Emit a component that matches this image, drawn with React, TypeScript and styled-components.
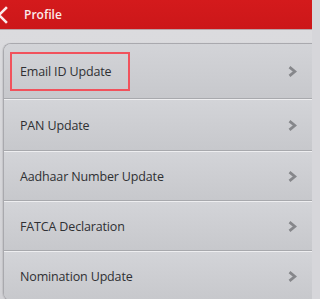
import React from 'react';
import styled, { createGlobalStyle } from 'styled-components';

const GlobalStyle = createGlobalStyle`
  html, body {
    margin: 0;
    padding: 0;
    background: #d6d6da;
  }
  body {
    font-family: "Open Sans", "Noto Sans", sans-serif;
    overflow: hidden;
  }
`;

const Screen = styled.div`
  width: 312px;
  height: 299px;
  display: flex;
  flex-direction: column;
  background: linear-gradient(180deg, #dcdcdf 0%, #d2d2d6 100%);
  overflow: hidden;
`;

const Header = styled.div`
  height: 29px;
  flex: none;
  display: flex;
  align-items: center;
  gap: 15px;
  background: linear-gradient(180deg, #d41a1c 0%, #cc1719 100%);
  border-bottom: 1px solid #b9a2a6;
`;

const BackIcon = styled.svg`
  width: 12px;
  height: 18px;
  flex: none;
  margin-left: -3px;
`;

const Title = styled.span`
  color: #fbeaea;
  font-size: 12px;
  font-weight: 600;
`;

const Body = styled.div`
  flex: 1;
  padding: 13px 0 0 3px;
`;

const Card = styled.div`
  margin-right: -20px;
  border: 1px solid #a9a9ae;
  border-right: none;
  border-radius: 8px 0 0 8px;
  overflow: hidden;
  box-shadow: -1px 0 1px rgba(0, 0, 0, 0.08);
`;

const Row = styled.div<{ $h: number }>`
  height: ${(p) => p.$h}px;
  display: flex;
  align-items: center;
  justify-content: space-between;
  padding: 1px 35px 0 16px;
  box-sizing: border-box;
  background: linear-gradient(180deg, #d3d4d8 0%, #c7c8cc 100%);
  border-top: 1px solid #eeeef0;
  border-bottom: 1px solid #a8a9ad;
  &:first-child {
    border-top: none;
  }
  &:last-child {
    border-bottom: none;
  }
`;

const Label = styled.span<{ $boxed?: boolean }>`
  display: inline-block;
  color: #2f3033;
  font-size: 12.5px;
  line-height: 17px;
  letter-spacing: -0.15px;
  ${(p) =>
    p.$boxed
      ? `
    outline: 2px solid #f1525c;
    padding: 9px 17px 9px 8px;
    margin-left: -8px;
  `
      : ''}
`;

const Chevron = styled.svg`
  width: 9px;
  height: 11px;
  flex: none;
`;

const items = [
  { label: 'Email ID Update', h: 55, boxed: true },
  { label: 'PAN Update', h: 52 },
  { label: 'Aadhaar Number Update', h: 50 },
  { label: 'FATCA Declaration', h: 50 },
  { label: 'Nomination Update', h: 49 },
];

const App = () => {
  return (
    <Screen>
      <GlobalStyle />
      <Header>
        <BackIcon viewBox="0 0 12 18">
          <path d="M9 2 L2 9 L9 16" fill="none" stroke="#fbeaea" strokeWidth="2.6" strokeLinecap="square" />
        </BackIcon>
        <Title>Profile</Title>
      </Header>
      <Body>
        <Card>
          {items.map((it) => (
            <Row key={it.label} $h={it.h}>
              <Label $boxed={it.boxed}>{it.label}</Label>
              <Chevron viewBox="0 0 9 11">
                <path d="M1.5 1.2 L6.8 5.5 L1.5 9.8" fill="none" stroke="#86878b" strokeWidth="2.8" />
              </Chevron>
            </Row>
          ))}
        </Card>
      </Body>
    </Screen>
  );
};

export default App;
